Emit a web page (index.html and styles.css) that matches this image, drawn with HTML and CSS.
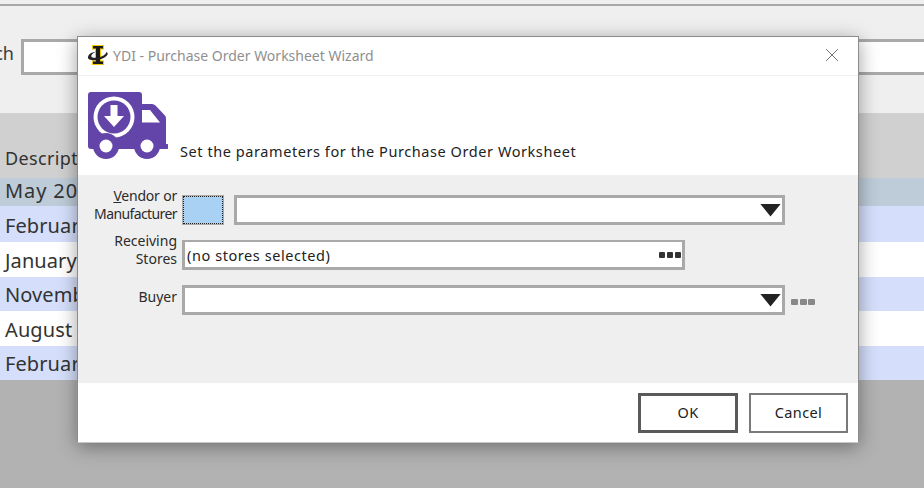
FILE: index.html
```html
<!DOCTYPE html>
<html lang="en">
<head>
<meta charset="utf-8">
<title>YDI - Purchase Order Worksheet Wizard</title>
<link rel="stylesheet" href="styles.css">
</head>
<body>
<div class="page">
  <div class="top-rule"></div>
  <div class="search-bar">
    <div class="search-label"><span>Search</span></div>
    <div class="search-input"></div>
  </div>
  <div class="grid-head"><span>Description</span></div>
  <div class="row selected"><span>May 2021</span></div>
  <div class="row blue tall"><span>February 2021</span></div>
  <div class="row tall"><span>January 2021</span></div>
  <div class="row blue"><span>November 2020</span></div>
  <div class="row tall"><span>August 2020</span></div>
  <div class="row blue"><span>February 2020</span></div>
  <div class="page-rest"></div>
</div>

<div class="dialog">
  <div class="titlebar">
    <svg class="logo" viewBox="0 0 20 20" width="20" height="20" aria-hidden="true">
      <path d="M4 0h12v4.500h-3v11h3V20H4v-4.500h3v-11H4z" fill="#f5c800"/>
      <path d="M5 1h10v2.500h-3v13h3V19H5v-2.500h3v-13H5z" fill="#1a1a1a"/>
      <path d="M0 12.500C0 9.500 3 7.500 8 6.500 4 8.500 2.500 10.500 3.500 12c2 1.500 8 1 12-1.500 2-1.200 3-2.500 2.500-3.500 1.500.5 2 1.500 1.500 2.500-1 2.500-6 5-10.500 5.500C4 15.500 0 15 0 12.500z" fill="#222"/>
    </svg>
    <span class="title">YDI - Purchase Order Worksheet Wizard</span>
    <svg class="close" viewBox="0 0 14 14" width="14" height="14" aria-hidden="true">
      <path d="M1 1l12 12M13 1L1 13" fill="none" stroke="#777" stroke-width="1"/>
    </svg>
  </div>
  <div class="banner">
    <svg class="truck" viewBox="0 0 80 68" width="80" height="68" aria-hidden="true">
      <path fill="#6344a8" d="M3 0h48a3 3 0 0 1 3 3v9h10a5 5 0 0 1 3.500 1.500l9 9.500a5 5 0 0 1 1.500 3.500V52h1a1.500 1.500 0 0 1 0 5H3a3 3 0 0 1-3-3V3a3 3 0 0 1 3-3z"/>
      <path fill="#fff" d="M54 18h8l10 12.500H54z"/>
      <circle cx="26" cy="25" r="20.500" fill="#fff"/>
      <circle cx="26" cy="25" r="16.500" fill="#6344a8"/>
      <path fill="#fff" d="M22.500 13h7v11h6.500L26 35 16 24h6.500z"/>
      <circle cx="18" cy="54" r="13" fill="#6344a8"/>
      <circle cx="18" cy="54" r="6.500" fill="#fff"/>
      <circle cx="59" cy="54" r="13" fill="#6344a8"/>
      <circle cx="59" cy="54" r="6.500" fill="#fff"/>
    </svg>
    <span class="banner-text">Set the parameters for the Purchase Order Worksheet</span>
  </div>
  <div class="form">
    <div class="form-row">
      <label class="field-label two-line"><span class="snug"><u>V</u>endor or</span><br><span class="tight">Manufacturer</span></label>
      <div class="swatch"></div>
      <div class="box combo vendor"><i class="arrow"></i></div>
    </div>
    <div class="form-row">
      <label class="field-label two-line">Receiving<br>Stores</label>
      <div class="box stores"><span>(no stores selected)</span><i class="dots"><b></b><b></b><b></b></i></div>
    </div>
    <div class="form-row">
      <label class="field-label one-line">Buyer</label>
      <div class="box combo buyer"><i class="arrow"></i></div>
      <i class="dots muted"><b></b><b></b><b></b></i>
    </div>
  </div>
  <div class="footer">
    <button class="btn default" type="button">OK</button>
    <button class="btn" type="button">Cancel</button>
  </div>
</div>
</body>
</html>
```
FILE: styles.css
```css
* { box-sizing: border-box; }
html, body { margin: 0; height: 100%; overflow: hidden; }
body { width: 924px; height: 488px; position: relative; font-family: "Noto Sans", "Open Sans", sans-serif; color: #222; }

.page { display: flex; flex-direction: column; height: 488px; background: #b2b2b2; overflow: hidden; }
.top-rule { height: 6px; background: #efefef; border-bottom: 2px solid #a8a8a8; flex: none; }
.search-bar { height: 107px; flex: none; background: #efefef; display: flex; align-items: flex-start; padding-top: 33px; gap: 7px; }
.search-label { width: 14px; height: 36px; overflow: hidden; display: flex; justify-content: flex-end; font-size: 18px; line-height: 28px; color: #3a3a3a; flex: none; }
.search-input { width: 1000px; height: 36px; flex: none; background: #fff; border: 3px solid #a9a9a9; }
.grid-head { height: 65px; flex: none; background: #d0d0d0; padding: 33px 0 0 5px; font-size: 18px; letter-spacing: .35px; line-height: 24px; color: #333; }
.row { height: 34px; flex: none; background: #fff; padding-left: 5px; font-size: 20px; letter-spacing: .1px; line-height: 35px; color: #333; white-space: nowrap; }
.row.tall { height: 35px; line-height: 37px; }
.row.blue { background: #d5dffb; }
.row.blue.tall { height: 36px; line-height: 39px; }
.row.selected { height: 28px; background: #bdccd8; line-height: 26px; letter-spacing: .9px; }
.page-rest { flex: 1; background: #b2b2b2; }

.dialog { position: absolute; left: 77px; top: 36px; width: 782px; height: 407px; background: #fff; border: 1px solid #8c8c8c; border-bottom-color: #c8c8c8; box-shadow: 0 4px 18px rgba(0,0,0,.38); display: flex; flex-direction: column; }
.titlebar { height: 39px; flex: none; display: flex; align-items: center; padding: 0 19px 3px 10px; border-bottom: 1px solid #f2f2f2; }
.logo { flex: none; margin-right: 5px; }
.title { flex: 1; font-size: 14px; padding-top: 2px; color: #8f8f8f; white-space: nowrap; }
.close { flex: none; }
.banner { height: 99px; flex: none; display: flex; align-items: flex-start; padding: 16px 0 0 10px; }
.truck { flex: none; }
.banner-text { margin: 49px 0 0 12px; font-size: 14.500px; letter-spacing: .57px; line-height: 20px; color: #222; white-space: nowrap; }
.form { height: 208px; flex: none; background: #efefef; padding-top: 20px; display: flex; flex-direction: column; gap: 15px; }
.form-row { height: 30px; display: flex; align-items: center; }
.field-label { width: 99px; flex: none; margin-right: 5px; text-align: right; font-size: 14px; line-height: 18px; color: #2b2b2b; white-space: nowrap; }
.field-label.two-line { margin-top: -10px; }
.field-label.one-line { margin-top: -6px; }
.tight { letter-spacing: -.6px; }
.snug { letter-spacing: -.2px; }
.swatch { width: 42px; height: 30px; flex: none; background: #a9d1f3; border: 1px solid #a9a9a9; outline: 1px dotted #222; outline-offset: -2px; margin-right: 10px; }
.box { height: 30px; flex: none; background: #fff; border: 3px solid #a9a9a9; display: flex; align-items: center; justify-content: flex-end; }
.vendor { width: 551px; }
.buyer { width: 603px; }
.stores { width: 503px; border-width: 2px 3px 3px 3px; justify-content: space-between; padding: 0 1px 0 2px; font-size: 14.500px; letter-spacing: .57px; color: #222; white-space: nowrap; }
.arrow { display: block; width: 21px; height: 13px; margin-right: 1px; background: #222; clip-path: polygon(0 0, 100% 0, 50% 100%); }
.dots { display: flex; gap: 2px; flex: none; }
.dots b { display: block; width: 6px; height: 6px; background: #333; border-radius: 1px; }
.dots.muted { margin-left: 6px; margin-top: 4px; gap: 1.500px; }
.dots.muted b { width: 7px; background: #888; }
.footer { flex: 1; display: flex; justify-content: flex-end; gap: 11px; padding: 10px 10px 0 0; align-items: flex-start; }
.btn { width: 99px; height: 40px; background: #fff; border: 2px solid #7a7a7a; font: 14.500px "Noto Sans", "Open Sans", sans-serif; letter-spacing: .4px; color: #222; padding: 0 0 2px; }
.btn.default { width: 100px; border: 3px solid #5a5a5a; }
```
